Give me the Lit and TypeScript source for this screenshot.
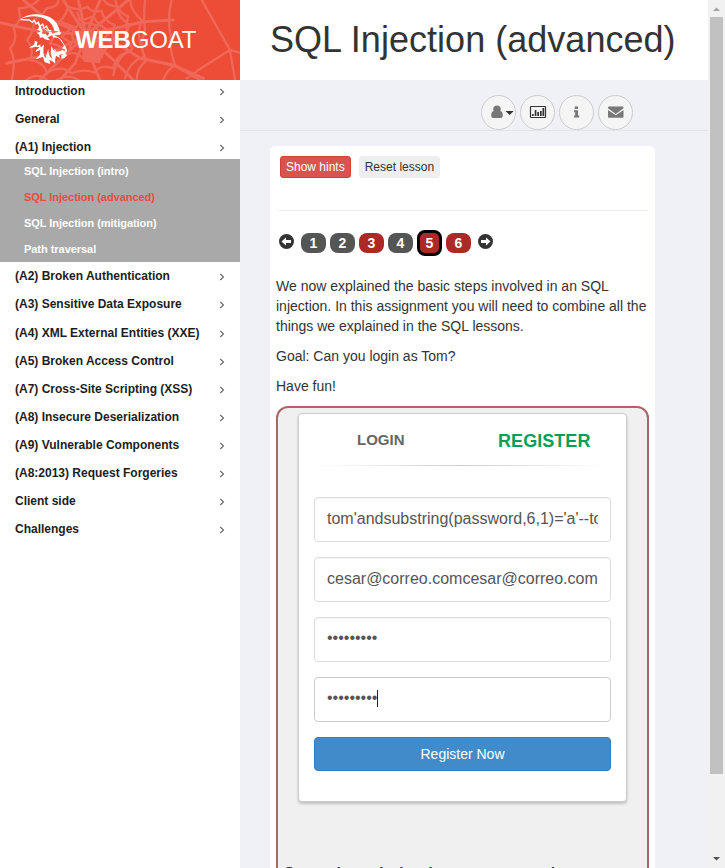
import { LitElement, html, css, svg } from "lit";
import { customElement } from "lit/decorators.js";
import { classMap } from "lit/directives/class-map.js";

@customElement("goat-brand")
class GoatBrand extends LitElement {
  static styles = css`
    :host { display: block; height: 80px; }
    .brand { display: grid; height: 80px; background: #ed4c37; overflow: hidden; }
    .art, .name { grid-area: 1 / 1; }
    .art { width: 240px; height: 80px; display: block; }
    .web { fill: none; stroke: #ef6859; stroke-width: 9; stroke-linecap: round; stroke-linejoin: round; }
    .thin { stroke-width: 7; }
    .goat { fill: #fff; }
    .ridge { fill: none; stroke: #fff; stroke-width: 4; stroke-linejoin: round; }
    .name { margin: 26px 0 0 75px; font: 24px/28px "Liberation Sans", Arial, sans-serif; letter-spacing: -0.12px; color: #fff; }
    .name b { font-weight: 700; }
  `;
  render() {
    return html`<div class="brand">
      <svg class="art" viewBox="0 0 720 240">
        <g class="web">
          <path d="M258 105L190 0M258 105L235 0M258 105L300 0M258 105L385 0M258 105L430 65L520 60M258 105L350 130L420 175L520 195L610 235M258 105L340 180L400 240M258 105L275 180L300 240M258 105L225 190L180 240M258 105L180 180L120 240M258 105L140 165L20 190M258 105L100 90L0 68M258 105L130 50L70 0" />
          <path class="thin" d="M205 20Q235 35 262 20Q275 40 305 32Q310 65 345 75Q330 105 345 130Q310 140 305 172Q275 160 250 175Q225 150 195 165Q190 135 150 130Q170 105 160 75Q195 60 205 20" />
          <path class="thin" d="M175 -5Q180 20 140 25Q120 55 100 60Q105 95 80 120Q105 145 90 180Q130 185 140 215Q190 195 215 220Q245 205 285 218Q300 190 340 205Q345 170 385 155Q365 115 390 75Q355 55 350 20Q315 15 310 -5" />
          <path class="thin" d="M120 -5Q95 25 55 25Q70 65 40 80Q55 120 30 145Q50 180 35 240M390 -5Q390 30 425 60Q405 110 435 170Q390 180 375 235M345 -5Q350 35 385 50Q368 95 397 147Q350 170 340 225M80 240Q110 215 140 240M170 240Q205 220 235 240" />
          <path class="thin" d="M515 0Q500 55 512 105Q508 150 525 195Q500 210 490 240M605 0L690 150L720 158M690 150L610 200L560 235M430 175Q480 188 525 198L600 240M690 152L705 240M435 0Q430 50 435 90Q415 145 440 180Q410 205 410 240" />
          <path class="thin" d="M220 90Q240 65 260 70Q285 65 295 90Q310 120 285 140Q255 155 235 135Q210 120 220 90M232 38L240 62L278 50L300 75L330 95L305 125L290 160M182 65L220 80L185 110L215 130L205 155" />
        </g>
        <path d="M255 115L315 120L300 190L250 185L245 150Z" fill="#ef6859" />
        <g class="goat">
          <path d="M57 60Q78 43 110 43Q154 44 170 70Q178 83 180 97Q172 93 164 93Q160 70 135 56Q110 46 85 50Q68 53 57 60Z" />
          <path class="ridge" d="M62 59L88 60L97 67L103 61L108 72L115 66L120 79L128 72L132 85L139 78L146 92L154 92" />
          <path d="M108 67Q122 74 127 86L139 88L145 96Q153 91 158 101Q173 93 184 97L180 105L162 106Q177 110 185 121L191 131Q199 139 201 151Q201 159 196 160L201 166L194 174L185 176Q181 166 190 165Q178 158 165 164Q175 151 187 156Q194 155 196 149L187 145Q188 139 193 138L181 120Q174 111 160 113L157 106L144 112Q146 119 152 121Q135 121 128 112L119 113Q121 108 115 102L109 98Q120 98 122 93L110 89Q117 86 117 80Q114 72 108 67ZM122 81Q130 91 126 101L137 101L142 108L148 99Q137 89 122 81Z" fill-rule="evenodd" />
          <path d="M104 122Q106 130 100 136Q94 138 87 144Q101 142 107 140L119 142Q108 149 106 156L121 150L119 166Q112 172 106 178Q121 174 129 170L134 187L151 192L148 180Q160 183 166 191Q164 178 168 167L179 174L177 158Q165 157 160 149L154 137Q150 160 157 177Q144 167 145 147L136 175Q127 163 132 133Q119 150 121 133L112 138Q109 132 113 126Z" />
          <path d="M162 145Q164 160 178 153Q190 148 194 155L179 165ZM181 164Q187 166 194 161L191 173Z" />
        </g>
      </svg>
      <div class="name"><b>WEB</b>GOAT</div>
    </div>`;
  }
}

interface Category { name: string; lessons?: string[]; }

const categories: Category[] = [
  { name: "Introduction" },
  { name: "General" },
  { name: "(A1) Injection", lessons: ["SQL Injection (intro)", "SQL Injection (advanced)", "SQL Injection (mitigation)", "Path traversal"] },
  { name: "(A2) Broken Authentication" },
  { name: "(A3) Sensitive Data Exposure" },
  { name: "(A4) XML External Entities (XXE)" },
  { name: "(A5) Broken Access Control" },
  { name: "(A7) Cross-Site Scripting (XSS)" },
  { name: "(A8) Insecure Deserialization" },
  { name: "(A9) Vulnerable Components" },
  { name: "(A8:2013) Request Forgeries" },
  { name: "Client side" },
  { name: "Challenges" },
];

@customElement("lesson-menu")
class LessonMenu extends LitElement {
  static styles = css`
    :host { display: block; font-family: "Liberation Sans", Arial, sans-serif; font-weight: 700; }
    .category { display: flex; justify-content: space-between; height: 28.14px; padding: 0 15px; font-size: 12px; line-height: 22px; color: #1d1d1d; }
    .chevron { width: 6px; height: 8px; margin-top: 8px; }
    .chevron path { fill: none; stroke: #666; stroke-width: 1.1; }
    .open { height: 22.6px; }
    .lessons { background: #a9a9a9; height: 103px; margin-bottom: 3.5px; box-sizing: border-box; }
    .lesson { height: 26px; padding-left: 24px; font-size: 11px; letter-spacing: -0.04px; line-height: 25px; color: #fff; }
    .current { color: #e84c3d; }
  `;
  render() {
    return categories.map(
      (c) => html`<div class=${classMap({ category: true, open: !!c.lessons })}>
          <span>${c.name}</span>
          <svg class="chevron" viewBox="0 0 6 8"><path d="M1.300 1L4.500 4L1.300 7" /></svg>
        </div>
        ${c.lessons
          ? html`<div class="lessons">
              ${c.lessons.map((l) => html`<div class=${classMap({ lesson: true, current: l.includes("advanced") })}>${l}</div>`)}
            </div>`
          : ""}`
    );
  }
}

const tools = [
  svg`<circle cx="16" cy="14.300" r="3.700" fill="#777"/><path d="M10.300 21v-1.500c0-2.300 1.200-3.300 2.700-3.500q3 2.400 6 0c1.500.2 2.700 1.200 2.700 3.500V21q0 2-1.700 2h-8q-1.700 0-1.700-2z" fill="#777"/><path d="M24.500 16h8.200l-4.100 4z" fill="#333"/>`,
  svg`<rect x="10.500" y="11.500" width="15" height="11" rx=".5" fill="none" stroke="#333" stroke-width="1.200"/><path d="M12 21v-2h1.700v2zM14.700 21v-6h1.700v6zM17.300 21v-4h1.700v4zM20 21v-5h1.700v5zM22.500 21v-8h1.700v8z" fill="#333"/>`,
  svg`<path d="M15.800 11.500h3.200v2.500h-3.200zM15 15.300h4v5.200h1.200v1.900H15v-1.900h1.200v-3.300H15z" fill="#777"/>`,
  svg`<path d="M10 12.500q0-1 1-1h13.500q1 0 1 1v.8l-7.700 5.700L10 13.300zM10 15l7.800 5.300 7.700-5.300v6.700q0 1-1 1H11q-1 0-1-1z" fill="#777"/>`,
];

@customElement("app-root")
class AppRoot extends LitElement {
  static styles = css`
    :host { display: block; height: 868px; overflow: hidden; font: 14px/20px "Liberation Sans", Arial, sans-serif; color: #333; }
    .page { display: grid; grid-template-columns: 240px 468px 17px; height: 868px; overflow: hidden; }
    .side { background: #fff; }
    .main { background: #f0f1f7; height: 868px; overflow: hidden; }
    .title { background: #fff; height: 80px; box-sizing: border-box; padding: 19px 0 0 30px; font-size: 36px; line-height: 41px; letter-spacing: 0.03px; font-weight: 400; margin: 0; white-space: nowrap; }
    .tools { display: flex; gap: 4px; height: 51px; box-sizing: border-box; padding: 15px 0 0 241px; border-bottom: 1px solid #e4e5e9; }
    .tool { flex: none; width: 33px; height: 33px; border: 1px solid #ccc; border-radius: 50%; background: #f5f5f5; }
    .tool svg { display: block; width: 35px; height: 35px; margin: -1px; }
    .card { width: 385px; height: 740px; margin: 15px 0 0 30px; padding: 10px 6px 0; box-sizing: border-box; background: #fff; border-radius: 5px; }
    .actions { display: flex; gap: 8px; height: 54px; padding-left: 4px; border-bottom: 1px solid #eee; border-bottom-left-radius: 3px; margin-right: 1px; }
    .btn { box-sizing: border-box; height: 22px; border-radius: 3px; border: 1px solid #eee; background: #eee; padding: 0 5px; font-size: 12px; line-height: 20px; }
    .danger { background: #d9534f; border-color: #d43f3a; color: #fff; }
    .pager { display: flex; align-items: center; height: 26px; margin: 19px 0 20px 3px; gap: 4px; }
    .arrow { width: 15px; height: 15px; margin: -3px 3px 0 0; }
    .next { margin: -3px 0 0 3px; }
    .badge { box-sizing: border-box; width: 25px; height: 20px; border-radius: 8px; background: #555; color: #fff; font-weight: 700; font-size: 14px; line-height: 21px; text-align: center; }
    .red { background: #ac2925; }
    .active { height: 26px; border: 3px solid #000; line-height: 21px; }
    p { margin: 0 0 10px; white-space: nowrap; }
    .attack { box-sizing: border-box; width: 373px; height: 600px; border: 2px solid #a66; border-radius: 12px; background: #f0f0f0; padding: 5px 20px 0; }
    .panel { box-sizing: border-box; width: 329px; height: 389px; border: 1px solid #ccc; border-radius: 4px; background: #fff; box-shadow: 0 2px 3px rgba(0,0,0,.2); padding: 0 15px; }
    .tabs { display: grid; grid-template-columns: 1fr 1fr; height: 51px; text-align: center; font-weight: 700; }
    .login { font-size: 15px; line-height: 52px; color: #666; margin-right: 15px; }
    .register { font-size: 18px; line-height: 54px; letter-spacing: 0.05px; color: #029f5b; margin-left: 15px; }
    .rule { height: 1px; margin-bottom: 31px; background: linear-gradient(to right, transparent 1%, #ccc 50%, transparent 99%); }
    .field { box-sizing: border-box; width: 297px; height: 45px; border: 1px solid #ddd; border-radius: 4px; padding: 0 12px; margin-bottom: 15px; color: #555; font-size: 16px; line-height: 42px; box-shadow: inset 0 1px 1px rgba(0,0,0,.05); }
    .clip { display: block; overflow: hidden; white-space: nowrap; }
    .secret { line-height: 40px; }
    .focus { border-color: #ccc; box-shadow: none; }
    .caret { display: inline-block; width: 1px; height: 17px; background: #222; vertical-align: -4px; }
    .submit { box-sizing: border-box; width: 297px; height: 34px; border: 1px solid #357ebd; border-radius: 4px; background: #428bca; color: #fff; text-align: center; line-height: 32px; }
    .feedback { margin: 62px 0 0 -14px; font-weight: 700; font-size: 16px; line-height: 20px; letter-spacing: 0.15px; white-space: nowrap; }
    .scroll { background: #f1f1f1; display: flex; flex-direction: column; align-items: center; }
    .end { width: 17px; height: 17px; display: block; }
    .thumb { width: 13px; height: 757px; background: #c1c1c1; }
    .gap { flex: 1; }
  `;
  render() {
    return html`<div class="page">
      <aside class="side"><goat-brand></goat-brand><lesson-menu></lesson-menu></aside>
      <main class="main">
        <h1 class="title">SQL Injection (advanced)</h1>
        <div class="tools">${tools.map((t) => html`<div class="tool"><svg viewBox="0 0 35 35">${t}</svg></div>`)}</div>
        <section class="card">
          <div class="actions"><div class="btn danger">Show hints</div><div class="btn">Reset lesson</div></div>
          <div class="pager">
            <svg class="arrow" viewBox="0 0 15 15"><circle cx="7.500" cy="7.500" r="7.500" fill="#333"/><path d="M2.500 7.500L7 3.500V6h5v3H7v2.500z" fill="#fff"/></svg>
            ${[1, 2, 3, 4, 5, 6].map((n) => html`<div class=${classMap({ badge: true, red: [3, 5, 6].includes(n), active: n === 5 })}>${n}</div>`)}
            <svg class="arrow next" viewBox="0 0 15 15"><circle cx="7.500" cy="7.500" r="7.500" fill="#333"/><path d="M12.500 7.500L8 3.500V6H3v3h5v2.500z" fill="#fff"/></svg>
          </div>
          <p>We now explained the basic steps involved in an SQL<br />injection. In this assignment you will need to combine all the<br />things we explained in the SQL lessons.</p>
          <p>Goal: Can you login as Tom?</p>
          <p>Have fun!</p>
          <div class="attack">
            <div class="panel">
              <div class="tabs"><div class="login">LOGIN</div><div class="register">REGISTER</div></div>
              <div class="rule"></div>
              <div class="field"><span class="clip">tom'andsubstring(password,6,1)='a'--tom</span></div>
              <div class="field"><span class="clip">cesar@correo.comcesar@correo.com</span></div>
              <div class="field secret">•••••••••</div>
              <div class="field secret focus">•••••••••<span class="caret"></span></div>
              <div class="submit">Register Now</div>
            </div>
            <div class="feedback">Sorry the solution is not correct, please try</div>
          </div>
        </section>
      </main>
      <div class="scroll">
        <svg class="end" viewBox="0 0 17 17"><path d="M5 11L8.500 7.500L12 11z" fill="#a3a3a3"/></svg>
        <div class="thumb"></div><div class="gap"></div>
        <svg class="end" viewBox="0 0 17 17"><path d="M5 6L12 6L8.500 9.500z" fill="#505050"/></svg>
      </div>
    </div>`;
  }
}
